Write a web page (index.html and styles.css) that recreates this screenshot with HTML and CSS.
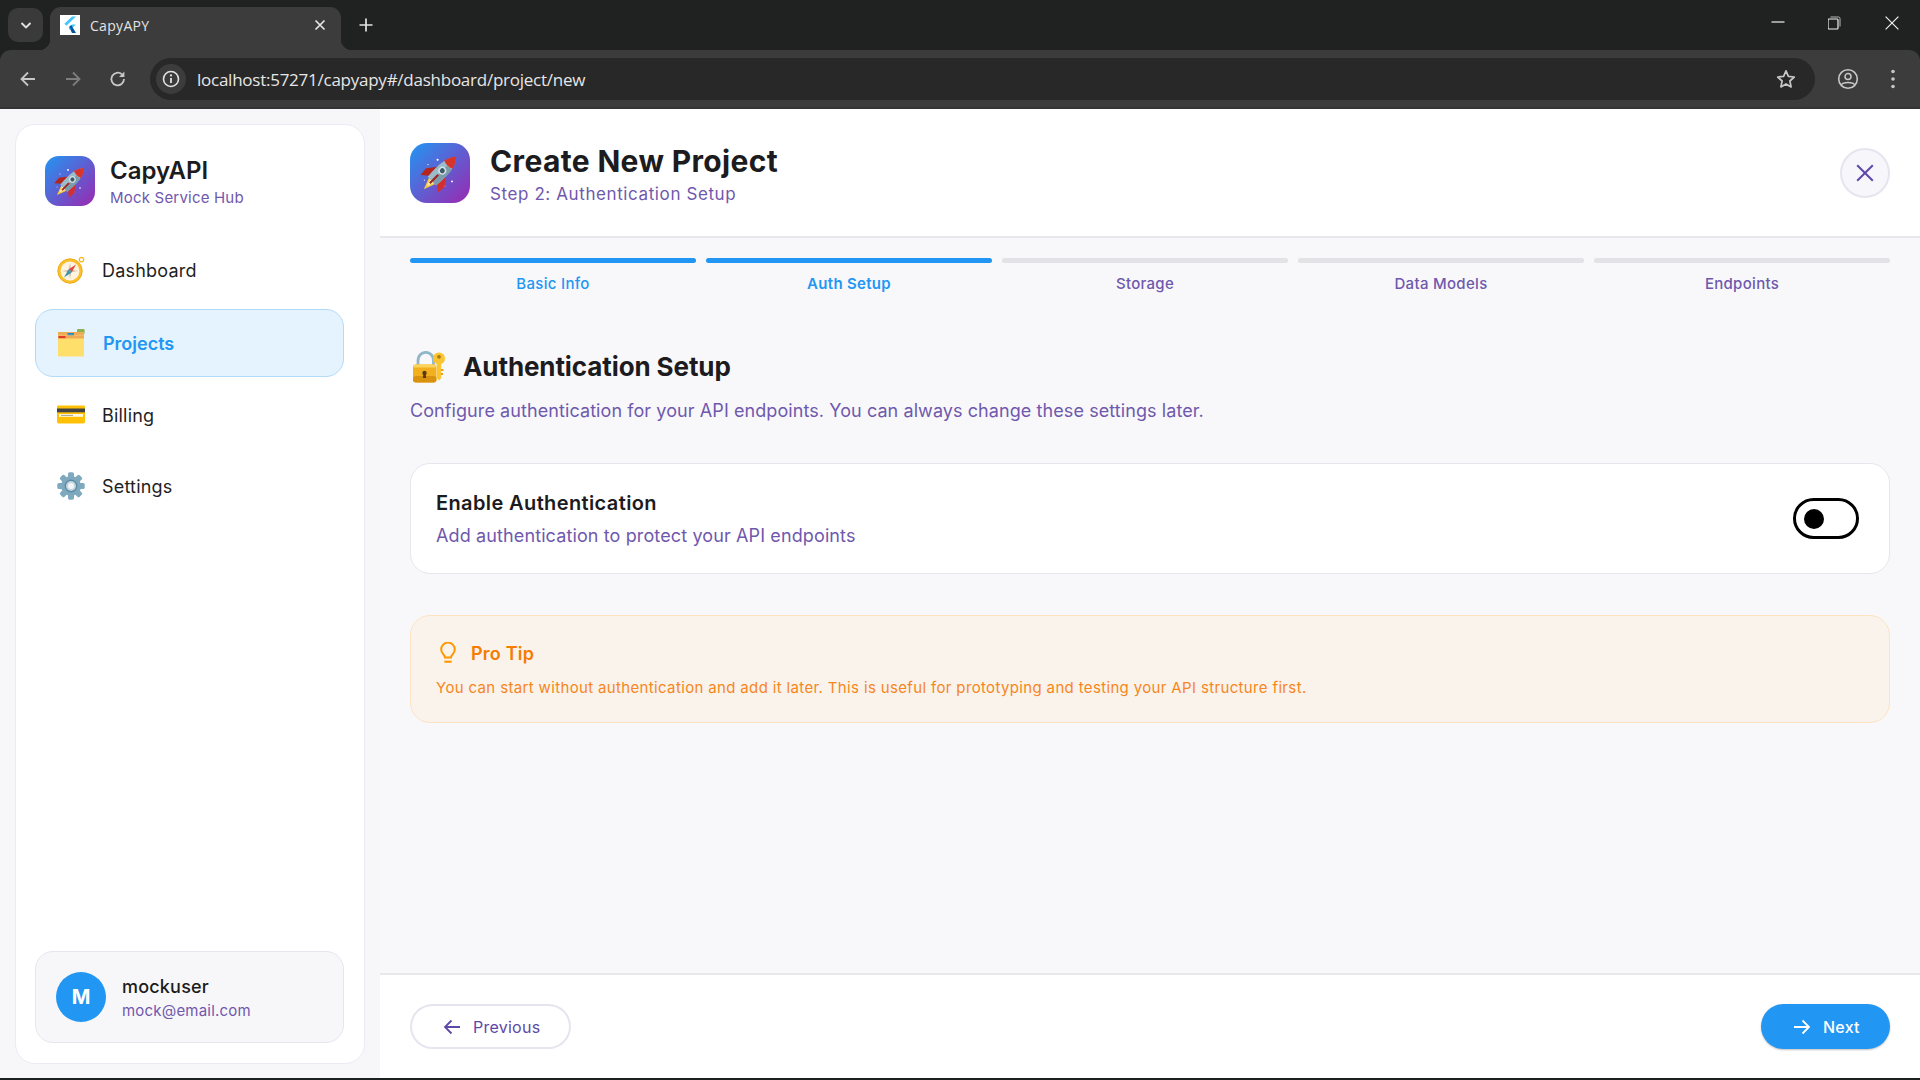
FILE: index.html
```html
<!DOCTYPE html>
<html lang="en">
<head>
<meta charset="utf-8">
<title>CapyAPY</title>
<link rel="stylesheet" href="styles.css">
</head>
<body>
<svg class="defs" width="0" height="0" aria-hidden="true">
  <defs>
    <symbol id="rocket" viewBox="0 0 32 32">
      <g transform="rotate(45 16 16)">
        <path d="M12.6 24.5 H19.4 L16 33.5 Z" fill="#f6c945"/>
        <path d="M14 24.5 H18 L16 30 Z" fill="#fff3c4"/>
        <path d="M11.4 14 L6 21 L6.6 27.6 L11.6 23.4 Z" fill="#b3261e"/>
        <path d="M20.6 14 L26 21 L25.4 27.6 L20.4 23.4 Z" fill="#d32f2f"/>
        <path d="M16 -1 C20.4 3.5 21.8 10.5 20.6 24.6 H11.4 C10.2 10.5 11.6 3.5 16 -1 Z" fill="#9dbccb"/>
        <path d="M16 8 H20.8 C21.2 14 21 19 20.6 24.6 H16 Z" fill="#7a9cad"/>
        <path d="M16 -1.5 C18.2 .8 19.6 3.6 20.5 7 C17.6 8.3 14.4 8.3 11.5 7 C12.4 3.6 13.8 .8 16 -1.5 Z" fill="#d8352a"/>
        <circle cx="16" cy="13.5" r="3" fill="#d5e2e8"/>
        <circle cx="16" cy="13.5" r="1.9" fill="#3f5a68"/>
        <path d="M15.2 18 H16.8 V27 H15.2 Z" fill="#a3231b"/>
      </g>
    </symbol>
    <symbol id="stars" viewBox="0 0 50 50">
      <circle cx="23" cy="14" r=".9" fill="#fff"/>
      <circle cx="15" cy="18" r=".6" fill="#e8e4ff"/>
      <circle cx="35" cy="32" r=".8" fill="#fff"/>
      <circle cx="12" cy="31" r=".5" fill="#e8e4ff"/>
      <circle cx="29" cy="36" r=".5" fill="#e8e4ff"/>
    </symbol>
  </defs>
</svg>

<header class="browser">
  <div class="tabstrip">
    <button class="tab-search" type="button" aria-label="Search tabs">
      <svg width="14" height="14" viewBox="0 0 14 14"><path d="M2.5 5 L7 9.5 L11.5 5" fill="none" stroke="#e3e3e3" stroke-width="1.9"/></svg>
    </button>
    <div class="tab">
      <span class="favicon">
        <svg width="20" height="20" viewBox="0 0 20 20">
          <path d="M12 1.5 H16 L6.4 10.8 L4.4 8.8 Z" fill="#47c5fb"/>
          <path d="M12 9.4 H16 L11.2 14 L9.2 12 Z" fill="#47c5fb"/>
          <path d="M9.2 12 L11.2 10 L16 18 H12 Z" fill="#00569e"/>
          <path d="M9.2 12 L11.3 14 L9.2 14.6 Z" fill="#00b5f8"/>
        </svg>
      </span>
      <span class="tab-title">CapyAPY</span>
      <svg class="tab-close" width="12" height="12" viewBox="0 0 12 12"><path d="M1.5 1.5 L10.5 10.5 M10.5 1.5 L1.5 10.5" stroke="#e6e6e6" stroke-width="1.7"/></svg>
    </div>
    <button class="new-tab" type="button" aria-label="New tab">
      <svg width="14" height="14" viewBox="0 0 14 14"><path d="M7 .5 V13.5 M.5 7 H13.5" stroke="#e3e3e3" stroke-width="1.7"/></svg>
    </button>
    <div class="strip-fill"></div>
    <div class="win-btn"><svg width="14" height="14" viewBox="0 0 14 14"><path d="M.5 6 H13.5" stroke="#f0f0f0" stroke-width="1.2"/></svg></div>
    <div class="win-btn"><svg width="14" height="14" viewBox="0 0 14 14"><rect x="0" y="3" width="10" height="10" rx="1" fill="none" stroke="#f0f0f0" stroke-width="1.2"/><path d="M2.5 1 H10.5 Q12 1 12 2.5 V10.5" fill="none" stroke="#b8b8b8" stroke-width="1"/></svg></div>
    <div class="win-btn"><svg width="14" height="14" viewBox="0 0 14 14"><path d="M.6 .6 L13.4 13.4 M13.4 .6 L.6 13.4" stroke="#f0f0f0" stroke-width="1.2"/></svg></div>
  </div>
  <div class="toolbar">
    <div class="tool-btn"><svg width="20" height="20" viewBox="0 0 20 20"><path d="M17 10 H4 M10 3.5 L3.5 10 L10 16.5" fill="none" stroke="#c7c7c7" stroke-width="1.8"/></svg></div>
    <div class="tool-btn"><svg width="20" height="20" viewBox="0 0 20 20"><path d="M3 10 H16 M10 3.5 L16.5 10 L10 16.5" fill="none" stroke="#7d7d7d" stroke-width="1.8"/></svg></div>
    <div class="tool-btn"><svg width="20" height="20" viewBox="0 0 20 20"><path d="M16 10 A6.3 6.3 0 1 1 14 5.4" fill="none" stroke="#c7c7c7" stroke-width="1.8"/><path d="M16.4 2.6 V8 H11 Z" fill="#c7c7c7"/></svg></div>
    <div class="omnibox">
      <span class="site-info">
        <svg width="18" height="18" viewBox="0 0 18 18"><circle cx="9" cy="9" r="7.5" fill="none" stroke="#e3e3e3" stroke-width="1.6"/><path d="M9 8 V13" stroke="#e3e3e3" stroke-width="1.8"/><circle cx="9" cy="5.4" r="1.1" fill="#e3e3e3"/></svg>
      </span>
      <span class="url">localhost:57271/capyapy#/dashboard/project/new</span>
      <svg class="star" width="20" height="20" viewBox="0 0 20 20"><path d="M10 1.9 L12.4 7.4 L18.3 8 L13.9 12 L15.1 17.9 L10 14.9 L4.9 17.9 L6.1 12 L1.7 8 L7.6 7.4 Z" fill="none" stroke="#c7c7c7" stroke-width="1.7" stroke-linejoin="round"/></svg>
    </div>
    <div class="tool-btn tool-first-right"><svg width="22" height="22" viewBox="0 0 22 22"><circle cx="11" cy="11" r="9.3" fill="none" stroke="#c7c7c7" stroke-width="1.6"/><circle cx="11" cy="8.6" r="3" fill="none" stroke="#c7c7c7" stroke-width="1.5"/><path d="M4.4 17 C6 13.8 16 13.8 17.6 17" fill="none" stroke="#c7c7c7" stroke-width="1.5"/></svg></div>
    <div class="tool-btn"><svg width="6" height="20" viewBox="0 0 6 20"><circle cx="3" cy="2.5" r="1.8" fill="#c7c7c7"/><circle cx="3" cy="10" r="1.8" fill="#c7c7c7"/><circle cx="3" cy="17.5" r="1.8" fill="#c7c7c7"/></svg></div>
  </div>
</header>

<div class="app">
  <aside class="sidebar">
    <div class="side-card">
      <div class="brand">
        <span class="logo logo-small">
          <svg class="logo-stars" viewBox="0 0 50 50"><use href="#stars"/></svg>
          <svg class="logo-rocket" viewBox="0 0 32 32"><use href="#rocket"/></svg>
        </span>
        <div class="brand-text">
          <div class="brand-name">CapyAPI</div>
          <div class="brand-sub">Mock Service Hub</div>
        </div>
      </div>
      <nav class="nav">
        <a class="nav-item">
          <svg class="nav-icon" viewBox="0 0 28 28">
            <circle cx="24.5" cy="3.6" r="2.2" fill="none" stroke="#f5b51c" stroke-width="1.2"/>
            <circle cx="13" cy="15" r="12.2" fill="#fbc02d"/>
            <circle cx="13" cy="15" r="12.2" fill="none" stroke="#eeaa14" stroke-width="1"/>
            <circle cx="13" cy="15" r="9.4" fill="#fdf3e0"/>
            <path d="M13 7 L14 14 L21 15 L14 16 L13 23 L12 16 L5 15 L12 14 Z" fill="#c7b29b"/>
            <path d="M19 8.6 L14.6 16.4 L11.4 13.6 Z" fill="#e5483a"/>
            <path d="M7 21.4 L11.4 13.6 L14.6 16.4 Z" fill="#3d93a8"/>
            <circle cx="13" cy="15" r="1.2" fill="#78909c"/>
          </svg>
          <span>Dashboard</span>
        </a>
        <a class="nav-item nav-active">
          <svg class="nav-icon" viewBox="0 0 28 28">
            <rect x="20" y="0" width="7.6" height="5" rx="1" fill="#8bb04f"/>
            <rect x="1" y="3" width="26" height="8" fill="#eeaa55"/>
            <rect x="10.5" y="4" width="6.5" height="3" fill="#1e88c9"/>
            <rect x="1.5" y="7" width="7" height="2.4" fill="#e5392f"/>
            <rect x="1" y="5.8" width="26" height=".9" fill="#f5c16c"/>
            <rect x="1" y="9.5" width="26" height="18" fill="#ffdf6b"/>
          </svg>
          <span>Projects</span>
        </a>
        <a class="nav-item">
          <svg class="nav-icon" viewBox="0 0 28 28">
            <rect x="0" y="4.5" width="28" height="18" rx="1.4" fill="#ffc107"/>
            <rect x="0" y="7.5" width="28" height="3.8" fill="#424242"/>
            <rect x="2" y="13" width="24" height="2.8" fill="#fff8e1"/>
            <path d="M4 14.4 H16" stroke="#8d8d7d" stroke-width=".8"/>
          </svg>
          <span>Billing</span>
        </a>
        <a class="nav-item">
          <svg class="nav-icon" viewBox="0 0 28 28">
            <g fill="#7fa9bf">
              <rect x="11" y=".3" width="6" height="27.4" rx="1.6"/>
              <rect x="11" y=".3" width="6" height="27.4" rx="1.6" transform="rotate(45 14 14)"/>
              <rect x="11" y=".3" width="6" height="27.4" rx="1.6" transform="rotate(90 14 14)"/>
              <rect x="11" y=".3" width="6" height="27.4" rx="1.6" transform="rotate(135 14 14)"/>
              <circle cx="14" cy="14" r="10"/>
            </g>
            <circle cx="14" cy="14" r="6.4" fill="#5d8aa3"/>
            <circle cx="14" cy="14" r="5" fill="#c3d6e0"/>
            <circle cx="14" cy="14" r="3" fill="#f4f7f9"/>
          </svg>
          <span>Settings</span>
        </a>
      </nav>
      <div class="user-card">
        <span class="avatar">M</span>
        <div>
          <div class="user-name">mockuser</div>
          <div class="user-mail">mock@email.com</div>
        </div>
      </div>
    </div>
  </aside>

  <main class="main">
    <div class="head">
      <span class="logo logo-large">
        <svg class="logo-stars" viewBox="0 0 50 50"><use href="#stars"/></svg>
        <svg class="logo-rocket" viewBox="0 0 32 32"><use href="#rocket"/></svg>
      </span>
      <div class="head-text">
        <h1 class="head-title">Create New Project</h1>
        <div class="head-sub">Step 2: Authentication Setup</div>
      </div>
      <button class="close-btn" type="button" aria-label="Close">
        <svg width="18" height="18" viewBox="0 0 18 18"><path d="M1.2 1.2 L16.8 16.8 M16.8 1.2 L1.2 16.8" stroke="#5e48a8" stroke-width="2"/></svg>
      </button>
    </div>

    <div class="content">
      <div class="steps">
        <div class="step step-on"><div class="step-bar"></div><div class="step-label">Basic Info</div></div>
        <div class="step step-on step-current"><div class="step-bar"></div><div class="step-label">Auth Setup</div></div>
        <div class="step"><div class="step-bar"></div><div class="step-label">Storage</div></div>
        <div class="step"><div class="step-bar"></div><div class="step-label">Data Models</div></div>
        <div class="step"><div class="step-bar"></div><div class="step-label">Endpoints</div></div>
      </div>

      <div class="section-head">
        <svg class="section-icon" viewBox="0 0 32 32">
          <path d="M5 15 V10 C5 -1.5 20.5 -1.5 20.5 10 V15" fill="none" stroke="#8fb6c9" stroke-width="2.8"/>
          <rect x="0" y="13.5" width="23.5" height="18" rx="3" fill="#f2b01e"/>
          <rect x="0" y="25" width="23.5" height="6.5" rx="3" fill="#d9920f"/>
          <rect x="0" y="13.5" width="23.5" height="3" rx="1.5" fill="#ffd45c"/>
          <circle cx="11.5" cy="22" r="2.2" fill="#5a3a14"/>
          <path d="M10.5 22 H12.5 L13.2 27 H9.8 Z" fill="#5a3a14"/>
          <circle cx="26" cy="7.5" r="6" fill="#fbc530"/>
          <circle cx="26" cy="5.8" r="1.9" fill="#a9781a"/>
          <path d="M23.8 12 H28.2 V27 L26.2 29.5 L23.8 27 Z" fill="#fbc530"/>
          <path d="M28 18 H30.5 V20 H28 Z M28 22 H30 V24 H28 Z" fill="#e5a521"/>
        </svg>
        <h2 class="section-title">Authentication Setup</h2>
      </div>
      <p class="section-desc">Configure authentication for your API endpoints. You can always change these settings later.</p>

      <div class="auth-card">
        <div class="auth-text">
          <div class="auth-title">Enable Authentication</div>
          <div class="auth-sub">Add authentication to protect your API endpoints</div>
        </div>
        <div class="toggle"><span class="thumb"></span></div>
      </div>

      <div class="tip">
        <div class="tip-head">
          <svg class="tip-icon" viewBox="0 0 16 22">
            <path d="M5 15.5 C5 12.8 1.2 11.6 1.2 7.4 A6.8 6.8 0 0 1 14.8 7.4 C14.8 11.6 11 12.8 11 15.5 Z" fill="none" stroke="#ff9800" stroke-width="2"/>
            <rect x="4.4" y="18.6" width="7.2" height="2.2" fill="#ff9800"/>
          </svg>
          <span class="tip-title">Pro Tip</span>
        </div>
        <p class="tip-text">You can start without authentication and add it later. This is useful for prototyping and testing your API structure first.</p>
      </div>
    </div>

    <div class="foot">
      <button class="btn btn-prev" type="button">
        <svg width="18" height="16" viewBox="0 0 18 16"><path d="M17 8 H2 M8.5 1.5 L2 8 L8.5 14.5" fill="none" stroke="#5e48a8" stroke-width="1.8"/></svg>
        <span>Previous</span>
      </button>
      <button class="btn btn-next" type="button">
        <svg width="18" height="16" viewBox="0 0 18 16"><path d="M1 8 H16 M9.5 1.5 L16 8 L9.5 14.5" fill="none" stroke="#fff" stroke-width="1.8"/></svg>
        <span>Next</span>
      </button>
    </div>
  </main>
</div>
<div class="edge"></div>
</body>
</html>
```

FILE: styles.css
```css
* { box-sizing: border-box; }
html, body { margin: 0; height: 100%; }
body {
  width: 1920px; height: 1080px; overflow: hidden;
  display: flex; flex-direction: column;
  font-family: Inter, "Liberation Sans", sans-serif;
  background: #f8f8fb; color: #1c1b20;
}
.defs { position: absolute; }
button { font: inherit; padding: 0; border: 0; background: none; }
h1, h2, p { margin: 0; }

/* browser chrome */
.browser { height: 109px; flex: none; background: #202221; }
.tabstrip { height: 50px; display: flex; align-items: flex-start; }
.tab-search {
  width: 35px; height: 34px; margin: 8px 0 0 8px; border-radius: 10px;
  background: #3a3a3a; display: flex; align-items: center; justify-content: center;
}
.tab {
  position: relative; width: 291px; height: 43px; margin: 7px 0 0 7px; padding: 0 15px 7px 10px;
  background: #3c3c3c; border-radius: 11px 11px 0 0;
  display: flex; align-items: center;
}
.tab::before, .tab::after {
  content: ""; position: absolute; bottom: 0; width: 11px; height: 11px;
}
.tab::before { left: -11px; background: radial-gradient(circle at 0 0, transparent 11px, #3c3c3c 11.5px); }
.tab::after { right: -11px; background: radial-gradient(circle at 100% 0, transparent 11px, #3c3c3c 11.5px); }
.favicon { width: 20px; height: 20px; background: #fff; flex: none; display: block; }
.favicon svg { display: block; }
.tab-title {
  margin-left: 10px; flex: 1;
  font: 14px "Open Sans", "Noto Sans", sans-serif; letter-spacing: .3px; color: #e3e3e3;
}
.new-tab {
  width: 30px; height: 30px; margin: 10px 0 0 10px;
  display: flex; align-items: center; justify-content: center;
}
.strip-fill { flex: 1; }
.win-btn { width: 57px; height: 46px; display: flex; align-items: center; justify-content: center; }
.toolbar {
  height: 59px; padding: 8px 5px 0 5px; display: flex; align-items: flex-start;
  background: #3c3c3c; border-bottom: 2px solid #343434; border-radius: 11px 11px 0 0;
}
.tool-btn { width: 45px; height: 42px; flex: none; display: flex; align-items: center; justify-content: center; }
.tool-first-right { margin-left: 10px; }
.omnibox {
  flex: 1; height: 42px; margin-left: 10px; padding: 0 19px 0 6px; border-radius: 21px;
  background: #282828; display: flex; align-items: center;
}
.site-info {
  width: 30px; height: 30px; border-radius: 50%; background: #3c3c3c; flex: none;
  display: flex; align-items: center; justify-content: center;
}
.url {
  margin-left: 11px; flex: 1;
  font: 17px "Open Sans", "Noto Sans", sans-serif; letter-spacing: -.25px; color: #e6e6e6;
}
.star { flex: none; }

/* app frame */
.app { flex: 1; min-height: 0; display: flex; }
.edge { height: 2px; flex: none; background: #1b2020; }

/* sidebar */
.sidebar { width: 380px; flex: none; padding: 15px 15px 14px 15px; background: #f7f7fa; }
.side-card {
  height: 100%; padding: 31px 20px 20px 19px; background: #fff;
  border: 1px solid #eceaf2; border-radius: 20px;
  display: flex; flex-direction: column;
}
.brand { display: flex; align-items: center; gap: 15px; padding-left: 10px; height: 50px; }
.brand-text { margin-top: 2px; }
.logo {
  position: relative; flex: none; display: block;
  background: linear-gradient(135deg, #2196f3, #9c27b0);
}
.logo-small { width: 50px; height: 50px; border-radius: 14px; }
.logo-large { width: 60px; height: 60px; border-radius: 17px; }
.logo-stars { position: absolute; inset: 0; width: 100%; height: 100%; }
.logo-rocket { position: absolute; left: 15%; top: 15%; width: 70%; height: 70%; overflow: visible; }
.brand-name { font-size: 24px; font-weight: 600; line-height: 29px; }
.brand-sub { font-size: 15px; line-height: 20px; margin-top: 3px; letter-spacing: .2px; color: #6f58ad; }
.nav { flex: 1; margin-top: 31px; display: flex; flex-direction: column; gap: 5px; }
.nav-item {
  height: 66px; padding: 0 20px 0 21px; display: flex; align-items: center; gap: 17px;
  font-size: 18px; letter-spacing: .2px; color: #1f1e23; border-radius: 18px; border: 1.5px solid transparent;
}
.nav-icon { width: 28px; height: 28px; flex: none; }
.nav-active {
  height: 68px; margin-top: 1px; gap: 18px; background: #e5f3fe; border-color: #b2daf9;
  color: #2196f3; font-weight: 600; letter-spacing: 0;
}
.user-card {
  height: 92px; padding: 0 20px; background: #f7f7fa;
  border: 1.5px solid #e7e5ee; border-radius: 18px;
  display: flex; align-items: center; gap: 16px;
}
.avatar {
  width: 50px; height: 50px; border-radius: 50%; background: #2196f3; color: #fff; flex: none;
  font-size: 20px; font-weight: 700; display: flex; align-items: center; justify-content: center;
}
.user-name { font-size: 18px; font-weight: 500; line-height: 24px; letter-spacing: .2px; margin-top: 1px; }
.user-mail { font-size: 15px; line-height: 20px; margin-top: 2px; letter-spacing: .2px; color: #6f58ad; }

/* main */
.main { flex: 1; min-width: 0; display: flex; flex-direction: column; }
.head {
  height: 129px; flex: none; padding: 0 30px; background: #fff;
  border-bottom: 2px solid #e8e7ee;
  display: flex; align-items: center;
}
.head-text { flex: 1; margin: 2px 0 0 20px; }
.head-title { font-size: 30px; font-weight: 700; line-height: 38px; letter-spacing: .35px; color: #1c1b20; }
.head-sub { font-size: 17px; line-height: 24px; margin-top: 2px; letter-spacing: .6px; color: #6f58ad; }
.close-btn {
  width: 50px; height: 50px; border-radius: 50%; background: #f7f6fb;
  border: 2px solid #e7e4ef; display: flex; align-items: center; justify-content: center;
}
.content { flex: 1; min-height: 0; padding: 20px 30px 0; }
.steps { display: flex; }
.step { flex: none; width: 20%; padding-right: 10px; text-align: center; }
.step:last-child { padding-right: 0; }
.step-bar { height: 5px; border-radius: 3px; background: #e2e2e7; }
.step-on .step-bar { background: #2196f3; }
.step-label {
  margin-top: 11px; font-size: 15px; line-height: 20px; font-weight: 500; letter-spacing: .3px; color: #6f58ad;
}
.step-on .step-label { color: #2196f3; }
.step-current .step-label { font-weight: 600; }
.section-head { margin-top: 56px; height: 34px; display: flex; align-items: center; padding-left: 3px; gap: 18px; }
.section-icon { width: 32px; height: 32px; flex: none; }
.section-title { font-size: 26px; font-weight: 700; line-height: 34px; letter-spacing: -.1px; }
.section-desc { margin-top: 15px; font-size: 18px; line-height: 24px; letter-spacing: .08px; color: #6f58ad; }
.auth-card {
  margin-top: 40px; height: 111px; padding: 0 30px 0 25px; background: #fff;
  border: 1.5px solid #e7e5ee; border-radius: 20px;
  display: flex; align-items: center; justify-content: space-between;
}
.auth-title { font-size: 20px; font-weight: 600; line-height: 26px; letter-spacing: .38px; }
.auth-sub { margin-top: 8px; font-size: 18px; line-height: 24px; letter-spacing: .12px; color: #6f58ad; }
.toggle {
  width: 66px; height: 41px; border: 3px solid #000; border-radius: 21px; background: #fff;
  display: flex; align-items: center; padding-left: 8px;
}
.thumb { width: 20px; height: 20px; border-radius: 50%; background: #000; }
.tip {
  margin-top: 41px; height: 108px; padding: 25px 25px 0; background: #f9f3ec;
  border: 1.5px solid #fde3c2; border-radius: 20px;
}
.tip-head { display: flex; align-items: center; gap: 15px; padding-left: 4px; height: 24px; }
.tip-icon { width: 16px; height: 22px; flex: none; }
.tip-title { font-size: 18px; font-weight: 600; letter-spacing: .2px; color: #f57c00; }
.tip-text { margin-top: 12px; font-size: 15px; line-height: 22px; letter-spacing: .35px; color: #f7861c; }
.foot {
  height: 105px; flex: none; padding: 29px 30px 0; background: #fff;
  border-top: 2px solid #e8e7ee;
  display: flex; justify-content: space-between; align-items: flex-start;
}
.btn {
  height: 45px; border-radius: 23px; display: flex; align-items: center; gap: 12px;
  font-size: 16px; letter-spacing: .25px; font-weight: 500;
}
.btn-prev { width: 161px; padding-left: 31px; border: 2px solid #e7e4ef; background: #fff; color: #5e48a8; font-weight: 400; }
.btn-next { width: 129px; padding-left: 32px; background: #2196f3; color: #fff; box-shadow: 0 1px 2px rgba(0,0,0,.25); }
```
